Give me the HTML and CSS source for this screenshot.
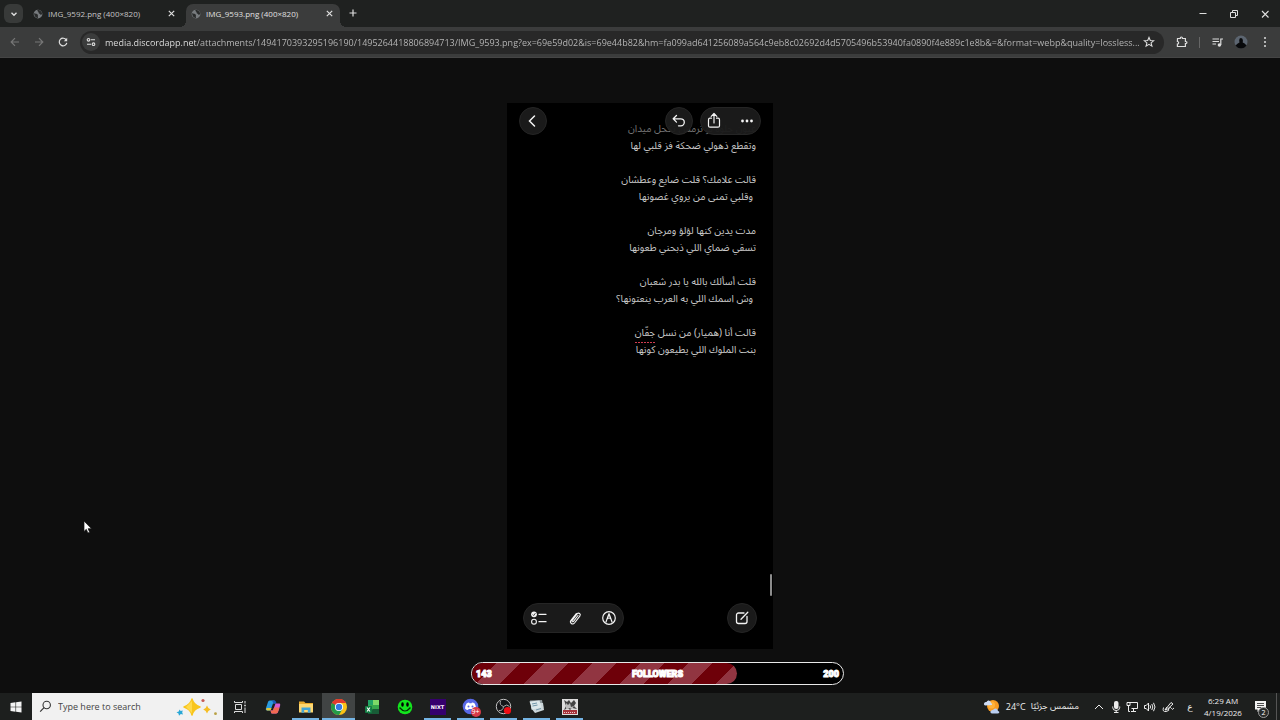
FILE: index.html
```html
<!DOCTYPE html>
<html lang="en">
<head>
<meta charset="utf-8">
<title>IMG_9593.png (400×820)</title>
<link rel="stylesheet" href="styles.css">
</head>
<body>
<svg class="defs" aria-hidden="true">
  <symbol id="globe" viewBox="0 0 16 16"><circle cx="8" cy="8" r="7" fill="#777b7e"/><path d="M2 6.500C4 8 5 7 7 8.500S7 12 8 14.500C4.500 14.500 1.500 11 2 6.500ZM7 1.500C7 4 9 4 9 6s3 1 3 3 2-1 2.500-1C15 4.500 11 1 7 1.500Z" fill="#292b2b"/></symbol>
  <symbol id="close" viewBox="0 0 10 10"><path d="M2 2l6 6M8 2L2 8" fill="none" stroke="currentColor" stroke-width="1.300"/></symbol>
</svg>
<div class="screen">
  <header class="browser">
    <div class="tabstrip">
      <button class="tab-search" aria-label="Search tabs"><svg width="10" height="10" viewBox="0 0 10 10"><path d="M2.500 3.800L5 6.300l2.500-2.500" fill="none" stroke="currentColor" stroke-width="1.400"/></svg></button>
      <div class="tab">
        <svg width="10" height="10"><use href="#globe"/></svg>
        <span class="tab-title">IMG_9592.png (400×820)</span>
        <button class="tab-close" aria-label="Close tab"><svg width="9" height="9"><use href="#close"/></svg></button>
      </div>
      <div class="tab active">
        <svg width="10" height="10"><use href="#globe"/></svg>
        <span class="tab-title">IMG_9593.png (400×820)</span>
        <button class="tab-close" aria-label="Close tab"><svg width="9" height="9"><use href="#close"/></svg></button>
      </div>
      <button class="new-tab" aria-label="New tab"><svg width="10" height="10" viewBox="0 0 10 10"><path d="M5 1.500v7M1.500 5h7" stroke="currentColor" stroke-width="1.200"/></svg></button>
      <div class="window-controls">
        <button aria-label="Minimize"><svg width="10" height="10" viewBox="0 0 10 10"><path d="M1.500 4.500h7" stroke="currentColor"/></svg></button>
        <button aria-label="Restore"><svg width="10" height="10" viewBox="0 0 10 10"><path d="M1.500 3.500h5v5h-5zM3.500 3V1.500h5v5H7" fill="none" stroke="currentColor"/></svg></button>
        <button aria-label="Close"><svg width="10" height="10" viewBox="0 0 10 10"><path d="M2 2l6.500 6.500M8.500 2L2 8.500" stroke="currentColor" stroke-width="1.100"/></svg></button>
      </div>
    </div>
    <div class="toolbar">
      <button class="nav dim" aria-label="Back"><svg width="12" height="12" viewBox="0 0 12 12"><path d="M10 6H2.500M6 2.200L2.200 6 6 9.800" fill="none" stroke="currentColor" stroke-width="1.200"/></svg></button>
      <button class="nav dim" aria-label="Forward"><svg width="12" height="12" viewBox="0 0 12 12"><path d="M2 6h7.500M6 2.200L9.800 6 6 9.800" fill="none" stroke="currentColor" stroke-width="1.200"/></svg></button>
      <button class="nav" aria-label="Reload"><svg width="12" height="12" viewBox="0 0 12 12"><path d="M9.300 4A3.800 3.800 0 1 0 9.800 6.800" fill="none" stroke="currentColor" stroke-width="1.200"/><path d="M10.200 1.800V5.200H6.800z" fill="currentColor"/></svg></button>
      <div class="omnibox">
        <button class="site-info" aria-label="View site information"><svg width="10" height="10" viewBox="0 0 10 10"><g fill="none" stroke="currentColor" stroke-width="1.100"><circle cx="2.500" cy="2.800" r="1.300"/><path d="M4.800 2.800H9M1 7.200h4.200"/><circle cx="7.500" cy="7.200" r="1.300"/></g></svg></button>
        <input class="url" type="text" aria-label="Address" value="media.discordapp.net/attachments/1494170393295196190/1495264418806894713/IMG_9593.png?ex=69e59d02&amp;is=69e44b82&amp;hm=fa099ad641256089a564c9eb8c02692d4d5705496b53940fa0890f4e889c1e8b&amp;=&amp;format=webp&amp;quality=lossless...">
        <button class="star" aria-label="Bookmark"><svg width="12" height="12" viewBox="0 0 12 12"><path d="M6 1.500l1.300 3 3.300.300-2.500 2.100.800 3.200L6 8.400l-2.900 1.700.800-3.200-2.500-2.100 3.300-.300z" fill="none" stroke="currentColor" stroke-width="1.100"/></svg></button>
      </div>
      <div class="toolbar-actions">
        <button aria-label="Extensions"><svg width="14" height="14" viewBox="0 0 14 14"><path d="M2.500 3.500H5.300c-.300-2 2.400-2 2.100 0h3v3c2-.200 2 2.300 0 2.100v2.900h-8V9c1.700 0 1.700-2.500 0-2.500z" fill="none" stroke="currentColor" stroke-width="1.200"/></svg></button>
        <span class="divider"></span>
        <button aria-label="Media controls"><svg width="13" height="13" viewBox="0 0 13 13"><path d="M1.500 3h6.500M1.500 5.500h6.500M1.500 8h3.500M9.800 9V3h2.200" fill="none" stroke="currentColor" stroke-width="1.200"/><circle cx="8.400" cy="9" r="1.700" fill="currentColor"/></svg></button>
        <button aria-label="Profile"><svg width="14" height="14" viewBox="0 0 14 14"><circle cx="7" cy="7" r="6.500" fill="#5c6570"/><path d="M1.500 10.500Q4 8 5.500 7.500 4.500 3 7 3t1.700 4.500q2 .500 3.800 3A6.500 6.500 0 0 1 1.500 10.500Z" fill="#08090b"/></svg></button>
        <button aria-label="Menu"><svg width="12" height="12" viewBox="0 0 12 12" fill="currentColor"><circle cx="6" cy="2" r="1"/><circle cx="6" cy="6" r="1"/><circle cx="6" cy="10" r="1"/></svg></button>
      </div>
    </div>
  </header>

  <main class="viewport">
    <section class="note" aria-label="Note">
      <div class="note-top">
        <button class="round" aria-label="Back"><svg width="16" height="16" viewBox="0 0 16 16"><path d="M9.500 3L4.500 8l5 5" fill="none" stroke="currentColor" stroke-width="1.500" stroke-linecap="round"/></svg></button>
        <span class="spacer"></span>
        <button class="round" aria-label="Undo"><svg width="16" height="16" viewBox="0 0 16 16"><path d="M5.500 2.500L2.200 5.800l3.300 3.300M2.500 5.800h7.300a3.300 3.300 0 0 1 0 7H7.500" fill="none" stroke="currentColor" stroke-width="1.300" stroke-linecap="round" stroke-linejoin="round"/></svg></button>
        <div class="pill share-pill">
          <button aria-label="Share"><svg width="16" height="18" viewBox="0 0 16 18"><path d="M5.500 6.200H4a1.500 1.500 0 0 0-1.500 1.500v6A1.500 1.500 0 0 0 4 15.200h8a1.500 1.500 0 0 0 1.500-1.500v-6A1.500 1.500 0 0 0 12 6.200h-1.500M8 11V1.800M5.200 4.300L8 1.500l2.800 2.800" fill="none" stroke="currentColor" stroke-width="1.200" stroke-linecap="round" stroke-linejoin="round"/></svg></button>
          <button aria-label="More"><svg width="16" height="16" viewBox="0 0 16 16" fill="currentColor"><circle cx="3.500" cy="8" r="1.400"/><circle cx="8" cy="8" r="1.400"/><circle cx="12.500" cy="8" r="1.400"/></svg></button>
        </div>
      </div>
      <div class="poem" dir="rtl" lang="ar">
        <p><span class="faded">عيون حلوة لو ترمش تكحل ميدان</span><br>وتقطع ذهولي ضحكة فز قلبي لها</p>
        <p>قالت علامك؟ قلت ضايع وعطشان<br><span class="lead">وقلبي تمنى من يروي غصونها</span></p>
        <p>مدت يدين كنها لؤلؤ ومرجان<br>تسقي ضماي اللي ذبحني طعونها</p>
        <p>قلت أسألك بالله يا بدر شعبان<br><span class="lead">وش اسمك اللي به العرب ينعتونها؟</span></p>
        <p>قالت أنا (هميار) من نسل <span class="misspelled">جفّان</span><br>بنت الملوك اللي يطيعون كونها</p>
      </div>
      <span class="scroll-thumb"></span>
      <div class="note-bottom">
        <div class="pill tools">
          <button aria-label="Checklist"><svg width="18" height="16" viewBox="0 0 18 16"><circle cx="4" cy="4.300" r="2.900" fill="currentColor"/><path d="M2.700 4.500l1 1 1.700-2.300" fill="none" stroke="#1b1b1b" stroke-width=".8"/><circle cx="4" cy="11.700" r="2.400" fill="none" stroke="currentColor" stroke-width="1.100"/><path d="M9 4.300h7M9 11.700h7" stroke="currentColor" stroke-width="1.300" stroke-linecap="round"/></svg></button>
          <button aria-label="Attach"><svg width="16" height="16" viewBox="0 0 16 16"><path d="M11 5.500L6.500 11.300c-.800 1-2 .100-1.300-.900L10 4c1.700-2 4.300.100 2.800 2.100L7.500 13c-2 2.400-5.300-.200-3.500-2.600L9.300 3.500" fill="none" stroke="currentColor" stroke-width="1.100" stroke-linecap="round"/></svg></button>
          <button aria-label="Markup"><svg width="16" height="16" viewBox="0 0 16 16"><circle cx="8" cy="8" r="6.300" fill="none" stroke="currentColor" stroke-width="1.200"/><path d="M4.800 12.500L7.200 5.800 8 4l.8 1.800 2.400 6.700M6.500 8.500q1.500-1 3 0" fill="none" stroke="currentColor" stroke-width="1.200"/><path d="M7 6.500h2L8 4z" fill="currentColor"/></svg></button>
        </div>
        <button class="round" aria-label="New note"><svg width="16" height="16" viewBox="0 0 16 16"><path d="M10 3H4.500A2 2 0 0 0 2.500 5v6.500a2 2 0 0 0 2 2H11a2 2 0 0 0 2-2V6.500M7 9.200l6.800-7" fill="none" stroke="currentColor" stroke-width="1.300" stroke-linecap="round"/></svg></button>
      </div>
    </section>
    <div class="goal" role="progressbar" aria-label="Followers" aria-valuemin="0" aria-valuemax="200" aria-valuenow="143">
      <div class="goal-fill" style="width:71.5%"></div>
      <div class="goal-text"><span>143</span><span>FOLLOWERS</span><span>200</span></div>
    </div>
    <svg class="cursor" width="10" height="14" viewBox="0 0 10 14"><path d="M1 1v10.500l2.300-2.200 1.600 3.700 1.800-.800-1.600-3.500h3.400z" fill="#fff" stroke="#111" stroke-width=".7"/></svg>
  </main>

  <footer class="taskbar">
    <button class="start" aria-label="Start"><svg width="12" height="12" viewBox="0 0 12 12" fill="#f3f3f3"><path d="M.5 2L5.500 1.300v4.400h-5zM6.100 1.200l5.400-.8v5.300H6.100zM.5 6.300h5v4.400L.5 10zM6.100 6.300h5.400v5.300l-5.400-.8z"/></svg></button>
    <div class="search">
      <svg width="13" height="13" viewBox="0 0 13 13"><circle cx="7.700" cy="5" r="3.700" fill="none" stroke="#333" stroke-width="1.100"/><path d="M5 7.700L1.200 11.600" stroke="#333" stroke-width="1.200"/></svg>
      <input type="text" aria-label="Search" placeholder="Type here to search">
      <svg width="44" height="20" viewBox="0 0 44 20"><path d="M17 2Q18.500 8 25 10 18.500 12 17 18 15.500 12 9 10 15.500 8 17 2Z" fill="#f8c51c" stroke="#f8c51c" stroke-width="1.500" stroke-linejoin="round"/><path d="M17 4v12l-6-6z" fill="#ffd94a"/><path d="M32 8.500q.800 3 3.800 4-3 .900-3.800 4-.800-3.100-3.800-4 3-1 3.800-4Z" fill="#f5bd24"/><path d="M4.500 12.500l1.200 1.500 2-.500-.500 2L8 17.500l-2.200-.500L4 18.800 3.500 16.500 1.500 15.200l2.300-.700z" fill="#28a7d6"/><circle cx="28" cy="3.500" r="1.600" fill="#c75b54"/><circle cx="40.500" cy="16.700" r="1.400" fill="#b8a044"/></svg>
    </div>
    <nav class="apps">
      <button aria-label="Task view"><svg width="14" height="14" viewBox="0 0 14 14" fill="none" stroke="#ddd"><path d="M2.500 4.500h6v5h-6zM1.500 1v1.500h8V1M1.500 13v-1.500h8V13M12 1v2.500M12 7.500V13"/><path d="M11.200 5.500h1.600" stroke-width="1.600"/></svg></button>
      <button aria-label="Copilot"><svg width="16" height="16" viewBox="0 0 16 16"><path d="M5 1.500h4.500l1 3H8L5.500 11.500H2C-.5 11.500 1.500 8 2.500 4.500 3 2.500 3.500 1.500 5 1.500Z" fill="#299be0"/><path d="M1.500 9h5l-1 2.500H2Q.7 11.300 1.500 9Z" fill="#e0c63b"/><path d="M7 1.500h2.500q1.500 0 2 3H9.500q-1 0-1.500-1z" fill="#1858b8"/><path d="M11 14.500H6.500l-1-3H8L10.500 4.500H14c2.500 0 .500 3.500-.500 7-.500 2-1 3-2.500 3Z" fill="#d75bd0"/><path d="M5.500 11.500H8l1-3h5.500l-1 3q-.600 3-2.500 3H7Q6 14.500 5.500 11.500Z" fill="#f26a52"/></svg></button>
      <button class="open" aria-label="File Explorer"><svg width="16" height="16" viewBox="0 0 16 16"><path d="M1 2.500h5l1.500 1.500H15v9H1z" fill="#e9aa2d"/><path d="M1 5h14v8.500H1z" fill="#ffd871"/><path d="M3.500 13.700V8.500h9v5.200h-2.700V11H6.200v2.700z" fill="#43a5d7"/></svg></button>
      <button class="open current" aria-label="Chrome"><svg width="18" height="18" viewBox="0 0 18 18"><circle cx="9" cy="9" r="8" fill="#fbc116"/><path d="M9 9L2.070 5A8 8 0 0 1 15.930 5H9Z" fill="#e33b2e"/><path d="M2.070 5A8 8 0 0 0 9 17l3.500-6z" fill="#249b49"/><path d="M2.070 5L5.600 11 9 5z" fill="#249b49"/><path d="M9 5h6.930A8 8 0 0 0 2.070 5L5.500 9z" fill="#e33b2e"/><path d="M2.070 5L5.500 11 7 8z" fill="#249b49"/><circle cx="9" cy="9" r="4.100" fill="#fff"/><circle cx="9" cy="9" r="3.200" fill="#3479e4"/></svg></button>
      <button aria-label="Excel"><svg width="16" height="16" viewBox="0 0 16 16"><path d="M4 1h5v7H4z" fill="#21a366"/><path d="M9 1h6v5H9z" fill="#7dda68"/><path d="M4 6h5v9H4zM9 6h6v9H9z" fill="#37a84c"/><path d="M9 10h6v5H4v-2z" fill="#185c37"/><rect x="1" y="7" width="7" height="7" rx="1" fill="#127c43"/><path d="M3 8.500l3 4M6 8.500l-3 4" stroke="#fff" stroke-width="1.100"/></svg></button>
      <button aria-label="Smile"><svg width="16" height="16" viewBox="0 0 16 16"><circle cx="8" cy="8" r="7.300" fill="#13e51e"/><ellipse cx="5.500" cy="5.500" rx="1.300" ry="2.200"/><ellipse cx="10.500" cy="5.500" rx="1.300" ry="2.200"/><path d="M3 9q5 6 10 0M2.500 9.500l1-1M12.500 8.500l1 1" fill="none" stroke="#052c07" stroke-width="1.200"/></svg></button>
      <button class="open" aria-label="NIXT"><span class="nixt">NIXT</span></button>
      <button class="open" aria-label="Discord"><span class="badged"><svg width="18" height="18" viewBox="0 0 18 18"><circle cx="8.500" cy="8.500" r="7.800" fill="#5868e6"/><path d="M4.500 5.500Q6 4.500 7 4.500l.500.700h2l.5-.7q1.500 0 2.700 1 1.300 2.500 1.300 5-1.500 1.500-3 1.500l-.700-1H6.700l-.7 1q-1.500 0-3-1.500 0-2.500 1.500-5Z" fill="#fff"/><circle cx="6.500" cy="8.500" r="1" fill="#5868e6"/><circle cx="10.500" cy="8.500" r="1" fill="#5868e6"/></svg><span class="badge">9+</span></span></button>
      <button class="open" aria-label="OBS"><svg width="18" height="18" viewBox="0 0 18 18"><circle cx="8.500" cy="8.500" r="7.200" fill="#151618" stroke="#c4c4c4" stroke-width="1"/><g fill="none" stroke="#a9a9a9" stroke-width="1"><path d="M8.500 8.500Q4 7 5.500 3"/><path d="M8.500 8.500Q12 5.500 14.500 8.500"/><path d="M8.500 8.500Q8 13 4 12.500"/></g><circle cx="12.500" cy="12.500" r="3.600" fill="#f00d14"/></svg></button>
      <button class="open" aria-label="Notes"><svg width="17" height="17" viewBox="0 0 17 17"><path d="M2 2.500l12-.5 1.500 8-12 2z" fill="#8f999e"/><path d="M4 5h11l1 7-9 3-4-5z" fill="#cbd5d9"/><path d="M1.500 3.500l10-1 2 7-9 2z" fill="#dce7ea"/><path d="M4 6l5-1M4.500 8l5-1M8 12l5-1.500" stroke="#7196a9"/></svg></button>
      <button class="open" aria-label="Game"><svg width="16" height="16" viewBox="0 0 16 16"><path fill="#ddd" d="M0 0h16v16H0z"/><path d="M2 1l3 2 2-2 2 3 3-3 2 3-2 3 3 3-5-1-2 2-2-2-4 2 2-4z" fill="#444"/><path d="M4 4l2 2 2-2 1 4 3-1-2 3-3-1-3 1z" fill="#bbb"/><path d="M1 11h14v4H1z" fill="#a7343c"/><path d="M2 13.500h12" stroke="#efc8c8" stroke-dasharray="1 1"/></svg></button>
    </nav>
    <div class="tray">
      <button class="weather"><svg width="18" height="18" viewBox="0 0 18 18"><circle cx="10" cy="8" r="6" fill="#f79b23"/><circle cx="8.500" cy="7" r="3.500" fill="#ffb23a"/><path d="M2.500 7.500Q.5 7.500 1 5.500T3.500 4q.700-2 2.500-1.500T8 5q1.500.500 1 2z" fill="#cfdcf4"/><path d="M9 15.500q-2-.200-1.500-2t2.500-1.500q1-2 3-1.500t2 2.500q1.500.300 1.300 1.500-.300 1-1.800 1z" fill="#b9cdef"/></svg><span>24°C</span><span dir="rtl" lang="ar" class="ar">مشمس جزئيًا</span></button>
      <button class="ico" aria-label="Hidden icons"><svg width="10" height="10" viewBox="0 0 10 10"><path d="M1 7l4-4 4 4" fill="none" stroke="currentColor"/></svg></button>
      <button class="ico" aria-label="Microphone"><svg width="12" height="14" viewBox="0 0 12 14"><rect x="4" y="1" width="4.500" height="8" rx="2" fill="currentColor"/><path d="M2.700 6.500v1q0 3 3.500 3t3.500-3v-1M6.200 10v2.500M4 12.500h4.500" fill="none" stroke="currentColor"/></svg></button>
      <button class="ico" aria-label="Network"><svg width="13" height="13" viewBox="0 0 13 13" fill="none" stroke="currentColor"><path d="M3.500 2.500h8v6h-6M7.500 8.500v3M5 11.500h5M1 2.500h3v3H1zM2.500 5.500v6H4"/></svg></button>
      <button class="ico" aria-label="Volume"><svg width="13" height="12" viewBox="0 0 13 12" fill="none" stroke="currentColor"><path d="M1.500 4.500h1.700L5.500 2v8L3.200 7.500H1.500zM7 4.300q1.200 1.700 0 3.400M8.800 3q2 3 0 6M10.500 1.800q3 4.200 0 8.400"/></svg></button>
      <button class="ico wide" aria-label="Pen"><svg width="13" height="13" viewBox="0 0 13 13" fill="none" stroke="currentColor"><path d="M3 10L9 2.500l2 1.500L5 9.500zM3 10l2-3M1.500 7.500Q0 12 4 11.500t2.500-3Q9 6.500 9.500 8.500T12 8"/></svg></button>
      <button class="lang" lang="ar">ع</button>
      <button class="clock"><span>6:29 AM</span><span>4/19/2026</span></button>
      <button class="notify" aria-label="Notifications"><svg width="13" height="13" viewBox="0 0 13 13"><path d="M1 1h11v8.500H6L3.500 12V9.500H1z" fill="#f2f2f2"/><path d="M3 3.500h7M3 5.500h7M3 7.500h4" stroke="#222" stroke-width=".8"/></svg><span class="count">2</span></button>
      <button class="desktop" aria-label="Show desktop"></button>
    </div>
  </footer>
</div>
</body>
</html>
```
FILE: styles.css
```css
* { box-sizing: border-box; }
body { margin: 0; background: #0e0e0e; font-family: "Open Sans", "Noto Sans", sans-serif; color: #dedede; }
button { border: 0; padding: 0; background: none; color: inherit; font: inherit; display: flex; align-items: center; justify-content: center; flex: none; }
input { border: 0; padding: 0; background: none; outline: 0; font: inherit; min-width: 0; }
svg { display: block; flex: none; }
.defs { position: absolute; width: 0; height: 0; }
.screen { min-height: 100vh; display: flex; flex-direction: column; }

.tabstrip { display: flex; height: 27px; background: #1f2120; padding-left: 4px; }
.tab-search { width: 19px; height: 19px; margin: 4px 5px 0 0; border-radius: 6px; background: #383a39; }
.tab { position: relative; display: flex; align-items: center; width: 154px; height: 23px; margin-top: 4px; margin-right: 4px; padding: 0 6px 4px 5px; gap: 5px; font-size: 8px; color: #c4c4c4; border-radius: 7px 7px 0 0; }
.tab.active { background: #3b3c3c; color: #e0e0e0; margin-right: 7px; }
.tab.active::before, .tab.active::after { content: ""; position: absolute; bottom: 0; width: 6px; height: 6px; }
.tab.active::before { left: -6px; background: radial-gradient(circle at 0 0, transparent 6px, #3b3c3c 6px); }
.tab.active::after { right: -6px; background: radial-gradient(circle at 100% 0, transparent 6px, #3b3c3c 6px); }
.tab-title { flex: 1; white-space: nowrap; }
.tab-close { color: #e0e0e0; }
.new-tab { width: 12px; height: 26px; }
.window-controls { display: flex; margin-left: auto; height: 27px; }
.window-controls button { width: 31px; }

.toolbar { display: flex; align-items: center; height: 31px; background: #3b3c3c; border-bottom: 1px solid #454545; padding: 0 9px 0 3px; }
.nav { width: 24px; height: 24px; }
.dim { color: #777; }
.omnibox { flex: 1; display: flex; align-items: center; height: 23px; margin-left: 5px; border-radius: 12px; background: #282828; padding: 0 9px 0 2px; }
.site-info { width: 18px; height: 18px; border-radius: 9px; background: #3b3c3c; margin-right: 5px; }
.url { flex: 1; font-size: 9px; height: 20px; color: transparent; background: linear-gradient(90deg, #e8e8e8 91px, #bcbcbc 91px); background-clip: text; -webkit-background-clip: text; }
.star { width: 13px; }
.toolbar-actions { display: flex; align-items: center; margin-left: 11px; }
.toolbar-actions button { width: 24px; height: 24px; }
.toolbar-actions button:first-child { width: 14px; }
.toolbar-actions button:last-child { margin-right: -6px; }
.divider { width: 1px; height: 11px; background: #666; margin: 0 5px 0 10px; }

.viewport { position: relative; flex: 1; display: flex; align-items: center; justify-content: center; background: #0e0e0e; }
.note { position: relative; display: flex; flex-direction: column; justify-content: space-between; width: 266px; min-height: 546px; background: #000; padding: 4px 12px 16px; color: #f4f4f4; }
.note-top { position: relative; z-index: 1; display: flex; align-items: center; gap: 7px; }
.spacer { flex: 1; }
.round { width: 28px; height: 28px; border-radius: 50%; background: #1b1b1bf2; border: 1px solid #252525; }
.pill { display: flex; align-items: center; justify-content: space-between; border-radius: 15px; background: #1b1b1bf2; border: 1px solid #252525; }
.share-pill { width: 61px; height: 28px; padding: 0 5px; }
.poem { flex: 1; margin-top: -15px; padding-right: 5px; font-family: "Noto Sans Arabic", "DejaVu Sans", sans-serif; font-size: 10px; line-height: 17px; color: #c9c9c9; }
.poem p { margin: 0 0 17px; white-space: nowrap; }
.faded { color: #757575; }
.lead { padding-right: 3px; }
.misspelled { background: repeating-linear-gradient(90deg, #d03c50 0 2px, transparent 2px 3px) bottom / 100% 1px no-repeat; }
.scroll-thumb { position: absolute; right: 1px; bottom: 53px; width: 2px; height: 22px; border-radius: 1px; background: #8c8c8c; }
.note-bottom { display: flex; align-items: center; justify-content: space-between; padding: 0 4px; }
.note-bottom .round { width: 30px; height: 30px; }
.tools { width: 101px; height: 30px; padding: 0 6px; }

.goal { position: absolute; left: 471px; right: 436px; bottom: 8px; height: 23px; border: 1px solid #e8e8e8; border-radius: 12px; background: #000; overflow: hidden; }
.goal-fill { height: 100%; border-radius: 0 11px 11px 0; background: repeating-linear-gradient(135deg, #6e0009 0 17px, #913541 17px 34px); }
.goal-text { position: absolute; inset: 0; display: flex; align-items: center; justify-content: space-between; padding: 0 4px; font: 900 9px Roboto, "Liberation Sans", sans-serif; color: #fff; -webkit-text-stroke: 1px #fff; }
.cursor { position: absolute; left: 83px; top: 462px; }

.taskbar { display: flex; height: 27px; background: #1d1f1e; }
.start { width: 32px; }
.search { display: flex; align-items: center; width: 191px; background: #f1f1f1; padding: 0 4px 0 7px; gap: 6px; }
.search input { flex: 1; font-size: 9px; color: #333; }
.search input::placeholder { color: #444; opacity: 1; }
.apps { display: flex; }
.apps button { position: relative; width: 33px; }
.open::after { content: ""; position: absolute; left: 3px; right: 3px; bottom: 0; height: 2px; background: #74b4e4; }
.current { background: #414444; }
.current::after { left: 0; right: 0; }
.nixt { width: 16px; height: 16px; background: #35006d; color: #fff; font: bold 5px/16px "DejaVu Sans", sans-serif; }
.badged { position: relative; }
.badge { position: absolute; right: -1px; bottom: -1px; width: 10px; height: 10px; border-radius: 5px; background: #d83a48; color: #fff; font-size: 7px; line-height: 10px; }
.tray { display: flex; margin-left: auto; font-size: 9px; color: #ececec; }
.weather { gap: 5px; margin-right: 11px; white-space: nowrap; font-size: 9px; }
.weather .ar { font-family: "Noto Sans Arabic", "DejaVu Sans", sans-serif; font-size: 9px; }
.ico { width: 17px; }
.wide { width: 20px; }
.lang { width: 24px; font-family: "DejaVu Sans", sans-serif; }
.clock { width: 42px; flex-direction: column; font-size: 8px; line-height: 12px; }
.notify { position: relative; width: 32px; }
.count { position: absolute; right: 7px; bottom: 2px; width: 11px; height: 11px; border: 1px solid #999; border-radius: 6px; background: #292b2a; color: #fff; font-size: 7px; line-height: 9px; }
.desktop { width: 4px; border-left: 1px solid #555; }
```
